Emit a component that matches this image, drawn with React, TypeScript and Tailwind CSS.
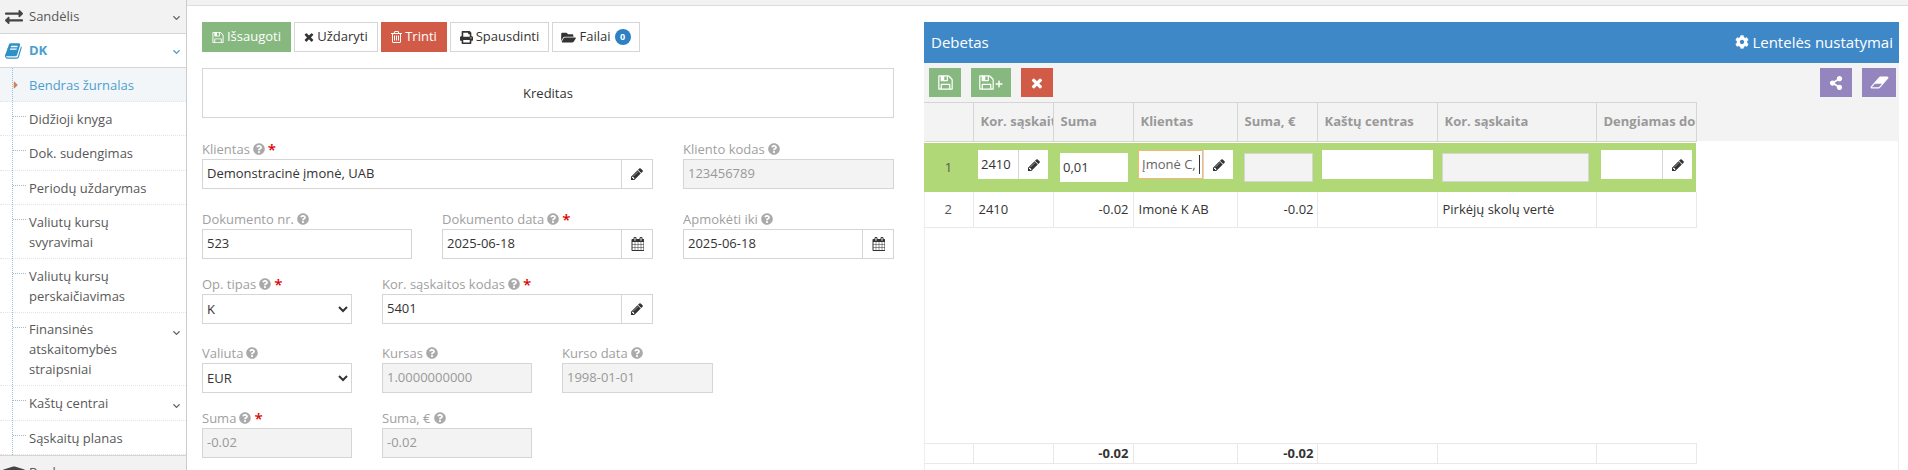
import type { ReactNode } from "react";
import {
  FaCaretRight,
  FaChevronDown,
  FaCog,
  FaExchangeAlt,
  FaFolderOpen,
  FaGraduationCap,
  FaPlus,
  FaPrint,
  FaQuestionCircle,
  FaShareAlt,
} from "react-icons/fa";

// font-awesome 4 glyphs, the fa package only ships the v5 shapes
const Pencil = () => (
  <svg viewBox="0 0 1792 1792" className="h-[14px] w-[14px]" fill="#333">
    <path d="M491 1536l91-91-235-235-91 91v107h128v128h107zm523-928q0-22-22-22-10 0-17 7l-542 542q-7 7-7 17 0 22 22 22 10 0 17-7l542-542q7-7 7-17zm-54-192l416 416-832 832h-416v-416zm683 96q0 53-37 90l-166 166-416-416 166-165q36-38 90-38 53 0 91 38l235 234q37 39 37 91z" />
  </svg>
);

const BookIcon = () => (
  <svg viewBox="0 0 1792 1792" className="h-[18px] w-[18px]" fill="#2f90c8">
    <path d="M1639 478q40 57 18 129l-275 906q-19 64-76.5 107.5t-122.5 43.5h-923q-77 0-148.5-53.5t-99.5-131.5q-24-67-2-127 0-4 3-27t4-37q1-8-3-21.5t-3-19.5q2-11 8-21t16.5-23.5 16.5-23.5q23-38 45-91.5t30-91.5q3-10 .5-30t-.5-28q3-11 17-28t17-23q21-36 42-92t25-90q1-9-2.5-32t.5-28q4-13 22-30.5t22-22.5q19-26 42.5-84.5t27.5-96.5q1-8-3-25.5t-2-26.5q2-8 9-18t18-23 17-21q8-12 16.5-30.5t15-35 16-36 19.5-32 26.5-23.5 36-11.5 47.5 5.5l-1 3q38-9 51-9h761q74 0 114 56t18 130l-274 906q-36 119-71.5 153.5t-128.5 34.5h-869q-27 0-38 15-11 16-1 43 24 70 144 70h923q29 0 56-15.5t35-41.5l300-987q7-22 5-57 38 15 59 43zm-1064 2q-4 13 2 22.5t20 9.5h608q13 0 25.5-9.5t16.5-22.5l21-64q4-13-2-22.5t-20-9.5h-608q-13 0-25.5 9.5t-16.5 22.5zm-83 256q-4 13 2 22.5t20 9.5h608q13 0 25.5-9.5t16.5-22.5l21-64q4-13-2-22.5t-20-9.5h-608q-13 0-25.5 9.5t-16.5 22.5z" />
  </svg>
);

const SaveIcon = ({ size }: { size: string }) => (
  <svg viewBox="0 0 1536 1792" className={size} fill="currentColor">
    <path
      transform="translate(-128 0)"
      d="M512 1536h768v-384h-768v384zm896 0h128v-896q0-14-10-38.5t-20-34.5l-281-281q-10-10-34-20t-39-10v416q0 40-28 68t-68 28h-576q-40 0-68-28t-28-68v-416h-128v1280h128v-416q0-40 28-68t68-28h832q40 0 68 28t28 68v416zm-384-928v-320q0-13-9.5-22.5t-22.5-9.5h-192q-13 0-22.5 9.5t-9.5 22.5v320q0 13 9.5 22.5t22.5 9.5h192q13 0 22.5-9.5t9.5-22.5zm640 32v928q0 40-28 68t-68 28h-1344q-40 0-68-28t-28-68v-1344q0-40 28-68t68-28h928q40 0 88 20t76 48l280 280q28 28 48 76t20 88z"
    />
  </svg>
);

const TrashIcon = () => (
  <svg viewBox="0 0 1408 1792" className="h-[14px] w-[11px]" fill="currentColor">
    <path
      transform="translate(-192 0)"
      d="M704 736v576q0 14-9 23t-23 9h-64q-14 0-23-9t-9-23v-576q0-14 9-23t23-9h64q14 0 23 9t9 23zm256 0v576q0 14-9 23t-23 9h-64q-14 0-23-9t-9-23v-576q0-14 9-23t23-9h64q14 0 23 9t9 23zm256 0v576q0 14-9 23t-23 9h-64q-14 0-23-9t-9-23v-576q0-14 9-23t23-9h64q14 0 23 9t9 23zm128 724v-948h-896v948q0 22 7 40.5t14.5 27 10.5 8.5h832q3 0 10.5-8.5t14.5-27 7-40.5zm-672-1076h448l-48-117q-7-9-17-11h-317q-10 2-17 11zm928 32v64q0 14-9 23t-23 9h-96v948q0 83-47 143.5t-113 60.5h-832q-66 0-113-58.5t-47-141.5v-952h-96q-14 0-23-9t-9-23v-64q0-14 9-23t23-9h309l70-167q15-37 54-63t79-26h320q40 0 79 26t54 63l70 167h309q14 0 23 9t9 23z"
    />
  </svg>
);

const CloseIcon = ({ size }: { size: string }) => (
  <svg viewBox="200 200 1400 1400" className={size} fill="currentColor">
    <path d="M1490 1322q0 40-28 68l-136 136q-28 28-68 28t-68-28l-294-294-294 294q-28 28-68 28t-68-28l-136-136q-28-28-28-68t28-68l294-294-294-294q-28-28-28-68t28-68l136-136q28-28 68-28t68 28l294 294 294-294q28-28 68-28t68 28l136 136q28 28 28 68t-28 68l-294 294 294 294q28 28 28 68z" />
  </svg>
);

const EraserIcon = () => (
  <svg viewBox="0 0 2048 1792" className="h-[17px] w-[19px]" fill="currentColor">
    <path d="M960 1408l336-384h-768l-336 384h768zm1013-1077q15 34 9.5 71.5t-30.5 65.5l-896 1024q-38 44-96 44h-768q-38 0-69.5-20.5t-47.5-54.5q-15-34-9.5-71.5t30.5-65.5l896-1024q38-44 96-44h768q38 0 70 20.5t47 54.5z" />
  </svg>
);

const CalendarIcon = () => (
  <svg viewBox="0 0 1664 1792" className="h-[14px] w-[13px]" fill="#333">
    <path d="M192 1664h288v-288h-288v288zm352 0h320v-288h-320v288zm-352-352h288v-320h-288v320zm352 0h320v-320h-320v320zm-352-384h288v-288h-288v288zm736 736h320v-288h-320v288zm-384-736h320v-288h-320v288zm768 736h288v-288h-288v288zm-384-352h320v-320h-320v320zm-352-864v-288q0-13-9.5-22.5t-22.5-9.5h-64q-13 0-22.5 9.5t-9.5 22.5v288q0 13 9.5 22.5t22.5 9.5h64q13 0 22.5-9.5t9.5-22.5zm736 864h288v-320h-288v320zm-384-384h320v-288h-320v288zm384 0h288v-288h-288v288zm32-480v-288q0-13-9.5-22.5t-22.5-9.5h-64q-13 0-22.5 9.5t-9.5 22.5v288q0 13 9.5 22.5t22.5 9.5h64q13 0 22.5-9.5t9.5-22.5zm384-64v1280q0 52-38 90t-90 38h-1408q-52 0-90-38t-38-90v-1280q0-52 38-90t90-38h128v-96q0-66 47-113t113-47h64q66 0 113 47t47 113v96h384v-96q0-66 47-113t113-47h64q66 0 113 47t47 113v96h128q52 0 90 38t38 90z" />
  </svg>
);

function SubItem({
  lines,
  active,
  arrow,
  h,
}: {
  lines: string[];
  active?: boolean;
  arrow?: boolean;
  h: string;
}) {
  return (
    <div
      className={`relative flex flex-col justify-center border-b border-dotted border-[#e4e4e4] pl-[29px] text-[13px] leading-[20px] ${h} ${
        active ? "bg-[#f3f6f9] text-[#4b9fcf]" : "text-[#585858]"
      }`}
    >
      {active ? (
        <FaCaretRight className="absolute left-[12px] top-[11px] h-[12px] w-[8px] text-[#d0805a]" />
      ) : (
        <span className="absolute left-[13px] top-[14px] w-[13px] border-t border-dotted border-[#9dbdd6]" />
      )}
      {lines.map((l) => (
        <span key={l}>{l}</span>
      ))}
      {arrow && <FaChevronDown className="absolute right-[5px] top-[16px] h-[8px] w-[9px] text-[#666]" />}
    </div>
  );
}

function Sidebar() {
  return (
    <aside className="flex h-[470px] w-[187px] shrink-0 flex-col overflow-hidden border-r border-[#cccccc] bg-white">
      <div className="relative flex h-[34px] shrink-0 items-center border-b border-[#d5d5d5] bg-[#f2f2f2] pl-[29px] text-[13px] text-[#585858]">
        <FaExchangeAlt className="absolute left-[5px] top-[8px] h-[18px] w-[18px] text-[#444]" />
        Sandėlis
        <FaChevronDown className="absolute right-[5px] top-[14px] h-[8px] w-[9px] text-[#666]" />
      </div>
      <div className="relative flex h-[34px] shrink-0 items-center border-b border-[#d5d5d5] bg-white pl-[29px] text-[13px] font-bold text-[#4b9fcf]">
        <span className="absolute left-[5px] top-[8px]">
          <BookIcon />
        </span>
        DK
        <FaChevronDown className="absolute right-[5px] top-[14px] h-[8px] w-[9px] text-[#4b9fcf]" />
      </div>
      <div className="relative shrink-0">
        <span className="absolute bottom-0 left-[12px] top-0 z-10 border-l border-dotted border-[#9dbdd6]" />
        <SubItem lines={["Bendras žurnalas"]} active h="h-[34px]" />
        <SubItem lines={["Didžioji knyga"]} h="h-[34px]" />
        <SubItem lines={["Dok. sudengimas"]} h="h-[35px]" />
        <SubItem lines={["Periodų uždarymas"]} h="h-[34px]" />
        <SubItem lines={["Valiutų kursų", "svyravimai"]} h="h-[54px]" />
        <SubItem lines={["Valiutų kursų", "perskaičiavimas"]} h="h-[54px]" />
        <SubItem lines={["Finansinės", "atskaitomybės", "straipsniai"]} arrow h="h-[73px]" />
        <SubItem lines={["Kaštų centrai"]} arrow h="h-[35px]" />
        <SubItem lines={["Sąskaitų planas"]} h="h-[34px]" />
      </div>
      <div className="relative flex h-[34px] shrink-0 items-center border-t border-[#d5d5d5] bg-[#f2f2f2] pl-[29px] text-[13px] text-[#585858]">
        <FaGraduationCap className="absolute left-[3px] top-[7px] h-[20px] w-[22px] text-[#444]" />
        Bankas
      </div>
    </aside>
  );
}

function ToolButton({ w, className, children }: { w: string; className: string; children: ReactNode }) {
  return (
    <button className={`flex h-[30px] items-center justify-center gap-[3px] border text-[13px] ${w} ${className}`}>
      {children}
    </button>
  );
}

function Label({ text, required }: { text: string; required?: boolean }) {
  return (
    <div className="flex h-[20px] items-center gap-[3px] text-[13px] leading-[20px] text-[#a0a0a0]">
      <span>{text}</span>
      <FaQuestionCircle className="h-[12px] w-[12px] text-[#aaa]" />
      {required && <span className="text-[15px] font-semibold leading-[20px] text-[#e00000]">*</span>}
    </div>
  );
}

function TextField({
  label,
  value,
  required,
  disabled,
  addon,
  w,
}: {
  label: string;
  value: string;
  required?: boolean;
  disabled?: boolean;
  addon?: ReactNode;
  w: string;
}) {
  return (
    <div className={w}>
      <Label text={label} required={required} />
      <div className={`flex h-[30px] border border-[#d5d5d5] ${disabled ? "bg-[#f3f3f3]" : "bg-white"}`}>
        <input
          readOnly
          value={value}
          className={`w-0 flex-1 bg-transparent pl-[4px] text-[13px] outline-none ${
            disabled ? "text-[#999]" : "text-[#333]"
          }`}
        />
        {addon && (
          <span className="flex w-[31px] shrink-0 items-center justify-center border-l border-[#d5d5d5]">{addon}</span>
        )}
      </div>
    </div>
  );
}

function SelectField({ label, value, w }: { label: string; value: string; w: string }) {
  return (
    <div className={w}>
      <Label text={label} required={label === "Op. tipas"} />
      <select
        defaultValue={value}
        className="h-[30px] w-full border border-[#d5d5d5] bg-white pl-0 text-[13px] text-[#333] outline-none"
      >
        <option>{value}</option>
      </select>
    </div>
  );
}

function Form() {
  return (
    <section className="w-[692px] shrink-0 pt-[16px]">
      <div className="flex gap-[3px]">
        <ToolButton w="w-[89px]" className="border-[#87b87f] bg-[#87b87f] text-white">
          <SaveIcon size="h-[13px] w-[12px]" />
          Išsaugoti
        </ToolButton>
        <ToolButton w="w-[84px]" className="border-[#d5d5d5] bg-white text-[#333]">
          <CloseIcon size="h-[10px] w-[10px]" />
          Uždaryti
        </ToolButton>
        <ToolButton w="w-[66px]" className="border-[#d15b47] bg-[#d15b47] text-white">
          <TrashIcon />
          Trinti
        </ToolButton>
        <ToolButton w="w-[99px]" className="border-[#d5d5d5] bg-white text-[#333]">
          <FaPrint className="h-[13px] w-[13px]" />
          Spausdinti
        </ToolButton>
        <ToolButton w="w-[88px]" className="border-[#d5d5d5] bg-white text-[#333]">
          <FaFolderOpen className="h-[13px] w-[15px]" />
          Failai
          <span className="ml-[1px] flex h-[16px] w-[16px] items-center justify-center rounded-full bg-[#2f7fc4] text-[9px] font-bold text-white">
            0
          </span>
        </ToolButton>
      </div>

      <div className="mt-[16px] flex h-[50px] items-center justify-center border border-[#d5d5d5] pt-[2px] text-[13px] text-[#333]">
        Kreditas
      </div>

      <div className="mt-[21px] flex gap-[30px]">
        <TextField w="w-[451px]" label="Klientas" value="Demonstracinė įmonė, UAB" required addon={<Pencil />} />
        <TextField w="w-[211px]" label="Kliento kodas" value="123456789" disabled />
      </div>
      <div className="mt-[20px] flex gap-[30px]">
        <TextField w="w-[210px]" label="Dokumento nr." value="523" />
        <TextField w="w-[211px]" label="Dokumento data" value="2025-06-18" required addon={<CalendarIcon />} />
        <TextField w="w-[211px]" label="Apmokėti iki" value="2025-06-18" addon={<CalendarIcon />} />
      </div>
      <div className="mt-[15px] flex gap-[30px]">
        <SelectField w="w-[150px]" label="Op. tipas" value="K" />
        <TextField w="w-[271px]" label="Kor. sąskaitos kodas" value="5401" required addon={<Pencil />} />
      </div>
      <div className="mt-[19px] flex gap-[30px]">
        <SelectField w="w-[150px]" label="Valiuta" value="EUR" />
        <TextField w="w-[150px]" label="Kursas" value="1.0000000000" disabled />
        <TextField w="w-[151px]" label="Kurso data" value="1998-01-01" disabled />
      </div>
      <div className="mt-[15px] flex gap-[30px]">
        <TextField w="w-[150px]" label="Suma" value="-0.02" required disabled />
        <TextField w="w-[150px]" label="Suma, €" value="-0.02" disabled />
      </div>
    </section>
  );
}

const columnWidths = [49, 80, 80, 104, 80, 120, 159, 100];

function Cols() {
  return (
    <colgroup>
      {columnWidths.map((c, i) => (
        <col key={i} style={{ width: c }} />
      ))}
    </colgroup>
  );
}

const headers = ["", "Kor. sąskaita", "Suma", "Klientas", "Suma, €", "Kaštų centras", "Kor. sąskaita", "Dengiamas dok."];

function CellInput({
  w,
  value,
  lowered,
  grey,
  addon,
  focused,
}: {
  w: string;
  value?: string;
  lowered?: boolean;
  grey?: boolean;
  addon?: boolean;
  focused?: boolean;
}) {
  return (
    <div
      className={`relative flex h-[29px] ${w} ${lowered ? "mt-[3px]" : ""} ${
        grey ? "border border-[#d5d5d5] bg-[#f3f3f3]" : "bg-white"
      }`}
    >
      <input
        readOnly
        value={value ?? ""}
        className={`w-0 flex-1 px-[3px] text-[13px] outline-none ${
          focused ? "border border-[#f5b975] text-[#666]" : "text-[#333]"
        }`}
      />
      {focused && <span className="absolute left-[61px] top-[5px] h-[19px] border-l border-[#333]" />}
      {addon && (
        <span className="flex w-[30px] shrink-0 items-center justify-center border-l border-[#d5d5d5] bg-white">
          <Pencil />
        </span>
      )}
    </div>
  );
}

function DebitPanel() {
  return (
    <section className="mt-[16px] flex h-[500px] w-[975px] shrink-0 flex-col">
      <div className="flex h-[41px] shrink-0 items-center justify-between bg-[#3f88c8] pb-[1px] pl-[7px] pr-[6px] text-[15px] text-white">
        <span>Debetas</span>
        <span className="flex items-center gap-[3px]">
          <FaCog className="h-[14px] w-[14px]" />
          Lentelės nustatymai
        </span>
      </div>
      <div className="flex h-[39px] shrink-0 items-center justify-between bg-[#f3f3f3] pl-[5px] pr-[3px]">
        <div className="flex gap-[10px]">
          <button className="flex h-[29px] w-[32px] items-center justify-center bg-[#87b87f] text-white">
            <SaveIcon size="h-[17px] w-[15px]" />
          </button>
          <button className="flex h-[29px] w-[40px] items-center justify-center gap-[1px] bg-[#87b87f] text-white">
            <SaveIcon size="h-[17px] w-[15px]" />
            <FaPlus className="mt-[2px] h-[8px] w-[8px]" />
          </button>
          <button className="flex h-[29px] w-[32px] items-center justify-center bg-[#d15b47] text-white">
            <CloseIcon size="h-[12px] w-[12px]" />
          </button>
        </div>
        <div className="flex gap-[10px]">
          <button className="flex h-[29px] w-[32px] items-center justify-center bg-[#9585bf] text-white">
            <FaShareAlt className="h-[14px] w-[14px]" />
          </button>
          <button className="flex h-[29px] w-[34px] items-center justify-center bg-[#9585bf] text-white">
            <EraserIcon />
          </button>
        </div>
      </div>

      <div className="h-[39px] shrink-0 bg-[#f3f3f3]">
        <table className="w-[772px] table-fixed border-collapse">
          <Cols />
          <thead>
            <tr className="h-[39px]">
              {headers.map((h, i) => (
                <th
                  key={i}
                  className="overflow-hidden whitespace-nowrap border border-l-0 border-[#d5d5d5] pl-[7px] text-left text-[13px] font-bold text-[#999]"
                >
                  {h}
                </th>
              ))}
            </tr>
          </thead>
        </table>
      </div>

      <div className="flex flex-1 flex-col border-x border-[#eeeeee]">
        <table className="-ml-px mt-[2px] w-[772px] shrink-0 table-fixed border-collapse text-[13px] text-[#333]">
          <Cols />
          <tbody>
            <tr className="h-[49px] bg-[#b0d877] align-top">
              <td className="pt-[24px] text-center leading-[0] text-[#555]">1</td>
              <td className="pl-[5px] pt-[7px]">
                <CellInput w="w-[70px]" value="2410" addon />
              </td>
              <td className="pl-[7px] pt-[7px]">
                <CellInput w="w-[68px]" value="0,01" lowered />
              </td>
              <td className="pl-[5px] pt-[7px]">
                <CellInput w="w-[95px]" value="Įmonė C," addon focused />
              </td>
              <td className="pl-[7px] pt-[7px]">
                <CellInput w="w-[69px]" lowered grey />
              </td>
              <td className="pl-[5px] pt-[7px]">
                <CellInput w="w-[111px]" />
              </td>
              <td className="pl-[5px] pt-[7px]">
                <CellInput w="w-[147px]" lowered grey />
              </td>
              <td className="pl-[5px] pt-[7px]">
                <CellInput w="w-[91px]" addon />
              </td>
            </tr>
            <tr className="h-[35px] border-b border-[#e8e8e8] leading-[20px]">
              <td className="border-r border-[#e8e8e8] text-center text-[#555]">2</td>
              <td className="border-r border-[#e8e8e8] pl-[5px]">2410</td>
              <td className="border-r border-[#e8e8e8] pr-[4px] text-right">-0.02</td>
              <td className="border-r border-[#e8e8e8] pl-[5px]">Imonė K AB</td>
              <td className="border-r border-[#e8e8e8] pr-[3px] text-right">-0.02</td>
              <td className="border-r border-[#e8e8e8]" />
              <td className="border-r border-[#e8e8e8] pl-[5px]">Pirkėjų skolų vertė</td>
              <td className="border-r border-[#e8e8e8]" />
            </tr>
          </tbody>
        </table>

        <div className="h-[215px] shrink-0" />

        <table className="-ml-px w-[772px] shrink-0 table-fixed border-collapse text-[13px] font-bold text-[#333]">
          <Cols />
          <tbody>
            <tr className="h-[20px] border-y border-[#e8e8e8] leading-[17px]">
              <td className="border-r border-[#e8e8e8]" />
              <td className="border-r border-[#e8e8e8]" />
              <td className="border-r border-[#e8e8e8] pr-[4px] text-right">-0.02</td>
              <td className="border-r border-[#e8e8e8]" />
              <td className="border-r border-[#e8e8e8] pr-[3px] text-right">-0.02</td>
              <td className="border-r border-[#e8e8e8]" />
              <td className="border-r border-[#e8e8e8]" />
              <td className="border-r border-[#e8e8e8]" />
            </tr>
          </tbody>
        </table>
      </div>
    </section>
  );
}

export default function App() {
  return (
    <div className="flex h-[470px] w-[1908px] overflow-hidden bg-white font-['Open_Sans',sans-serif]">
      <Sidebar />
      <main className="flex-1">
        <div className="h-[6px] border-b border-[#dddddd] bg-[#f2f2f2]" />
        <div className="flex gap-[30px] pl-[15px]">
          <Form />
          <DebitPanel />
        </div>
      </main>
    </div>
  );
}
